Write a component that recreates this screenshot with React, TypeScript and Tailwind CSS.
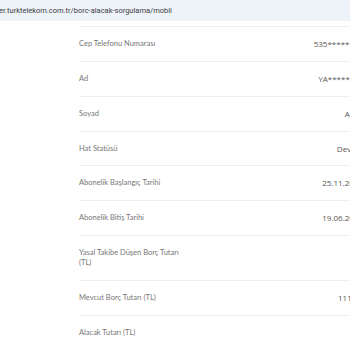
import React from "react"

const rows = [
  { label: "Cep Telefonu Numarası", value: "535******12", h: "h-[35px]" },
  { label: "Ad", value: "YA********", h: "h-[35px]" },
  { label: "Soyad", value: "A***", h: "h-[35px]" },
  { label: "Hat Statüsü", value: "Devam", h: "h-[34px]" },
  { label: "Abonelik Başlangıç Tarihi", value: "25.11.2019", h: "h-[35px]" },
  { label: "Abonelik Bitiş Tarihi", value: "19.06.2025", h: "h-[35px]" },
  { label: "Yasal Takibe Düşen Borç Tutarı (TL)", value: "", h: "h-[45px]" },
  { label: "Mevcut Borç Tutarı (TL)", value: "111,45", h: "h-[35px]" },
  { label: "Alacak Tutarı (TL)", value: "", h: "h-[35px]" },
]

export default function App() {
  return (
    <div className="w-[350px] h-[350px] overflow-hidden bg-white">
      {/* Address bar */}
      <div className="h-[21px] bg-[#eef2f9] flex items-center whitespace-nowrap">
        <span className="text-[7.5px] text-[#3c4043] font-['Roboto',sans-serif] -ml-[1px]">
          er.turktelekom.com.tr/borc-alacak-sorgulama/mobil
        </span>
      </div>

      {/* Table */}
      <div className="pt-[5px] pl-[79px]">
        <div className="w-[284px]">
          {rows.map((row) => (
            <div
              key={row.label}
              className={`${row.h} border-t border-[#efefef] flex items-center justify-between`}
            >
              <div className="w-[102px] text-[7.5px] leading-[10px] text-[#777] font-['Lato',sans-serif]">
                {row.label}
              </div>
              <div className="relative text-right text-[8px] text-[#555] font-['Open_Sans',sans-serif] whitespace-nowrap">
                {row.label.startsWith("Mevcut") && (
                  <span className="absolute right-0 -top-[7px] text-[5px] text-[#ccc]">TL</span>
                )}
                {row.value}
              </div>
            </div>
          ))}
        </div>
      </div>
    </div>
  )
}
